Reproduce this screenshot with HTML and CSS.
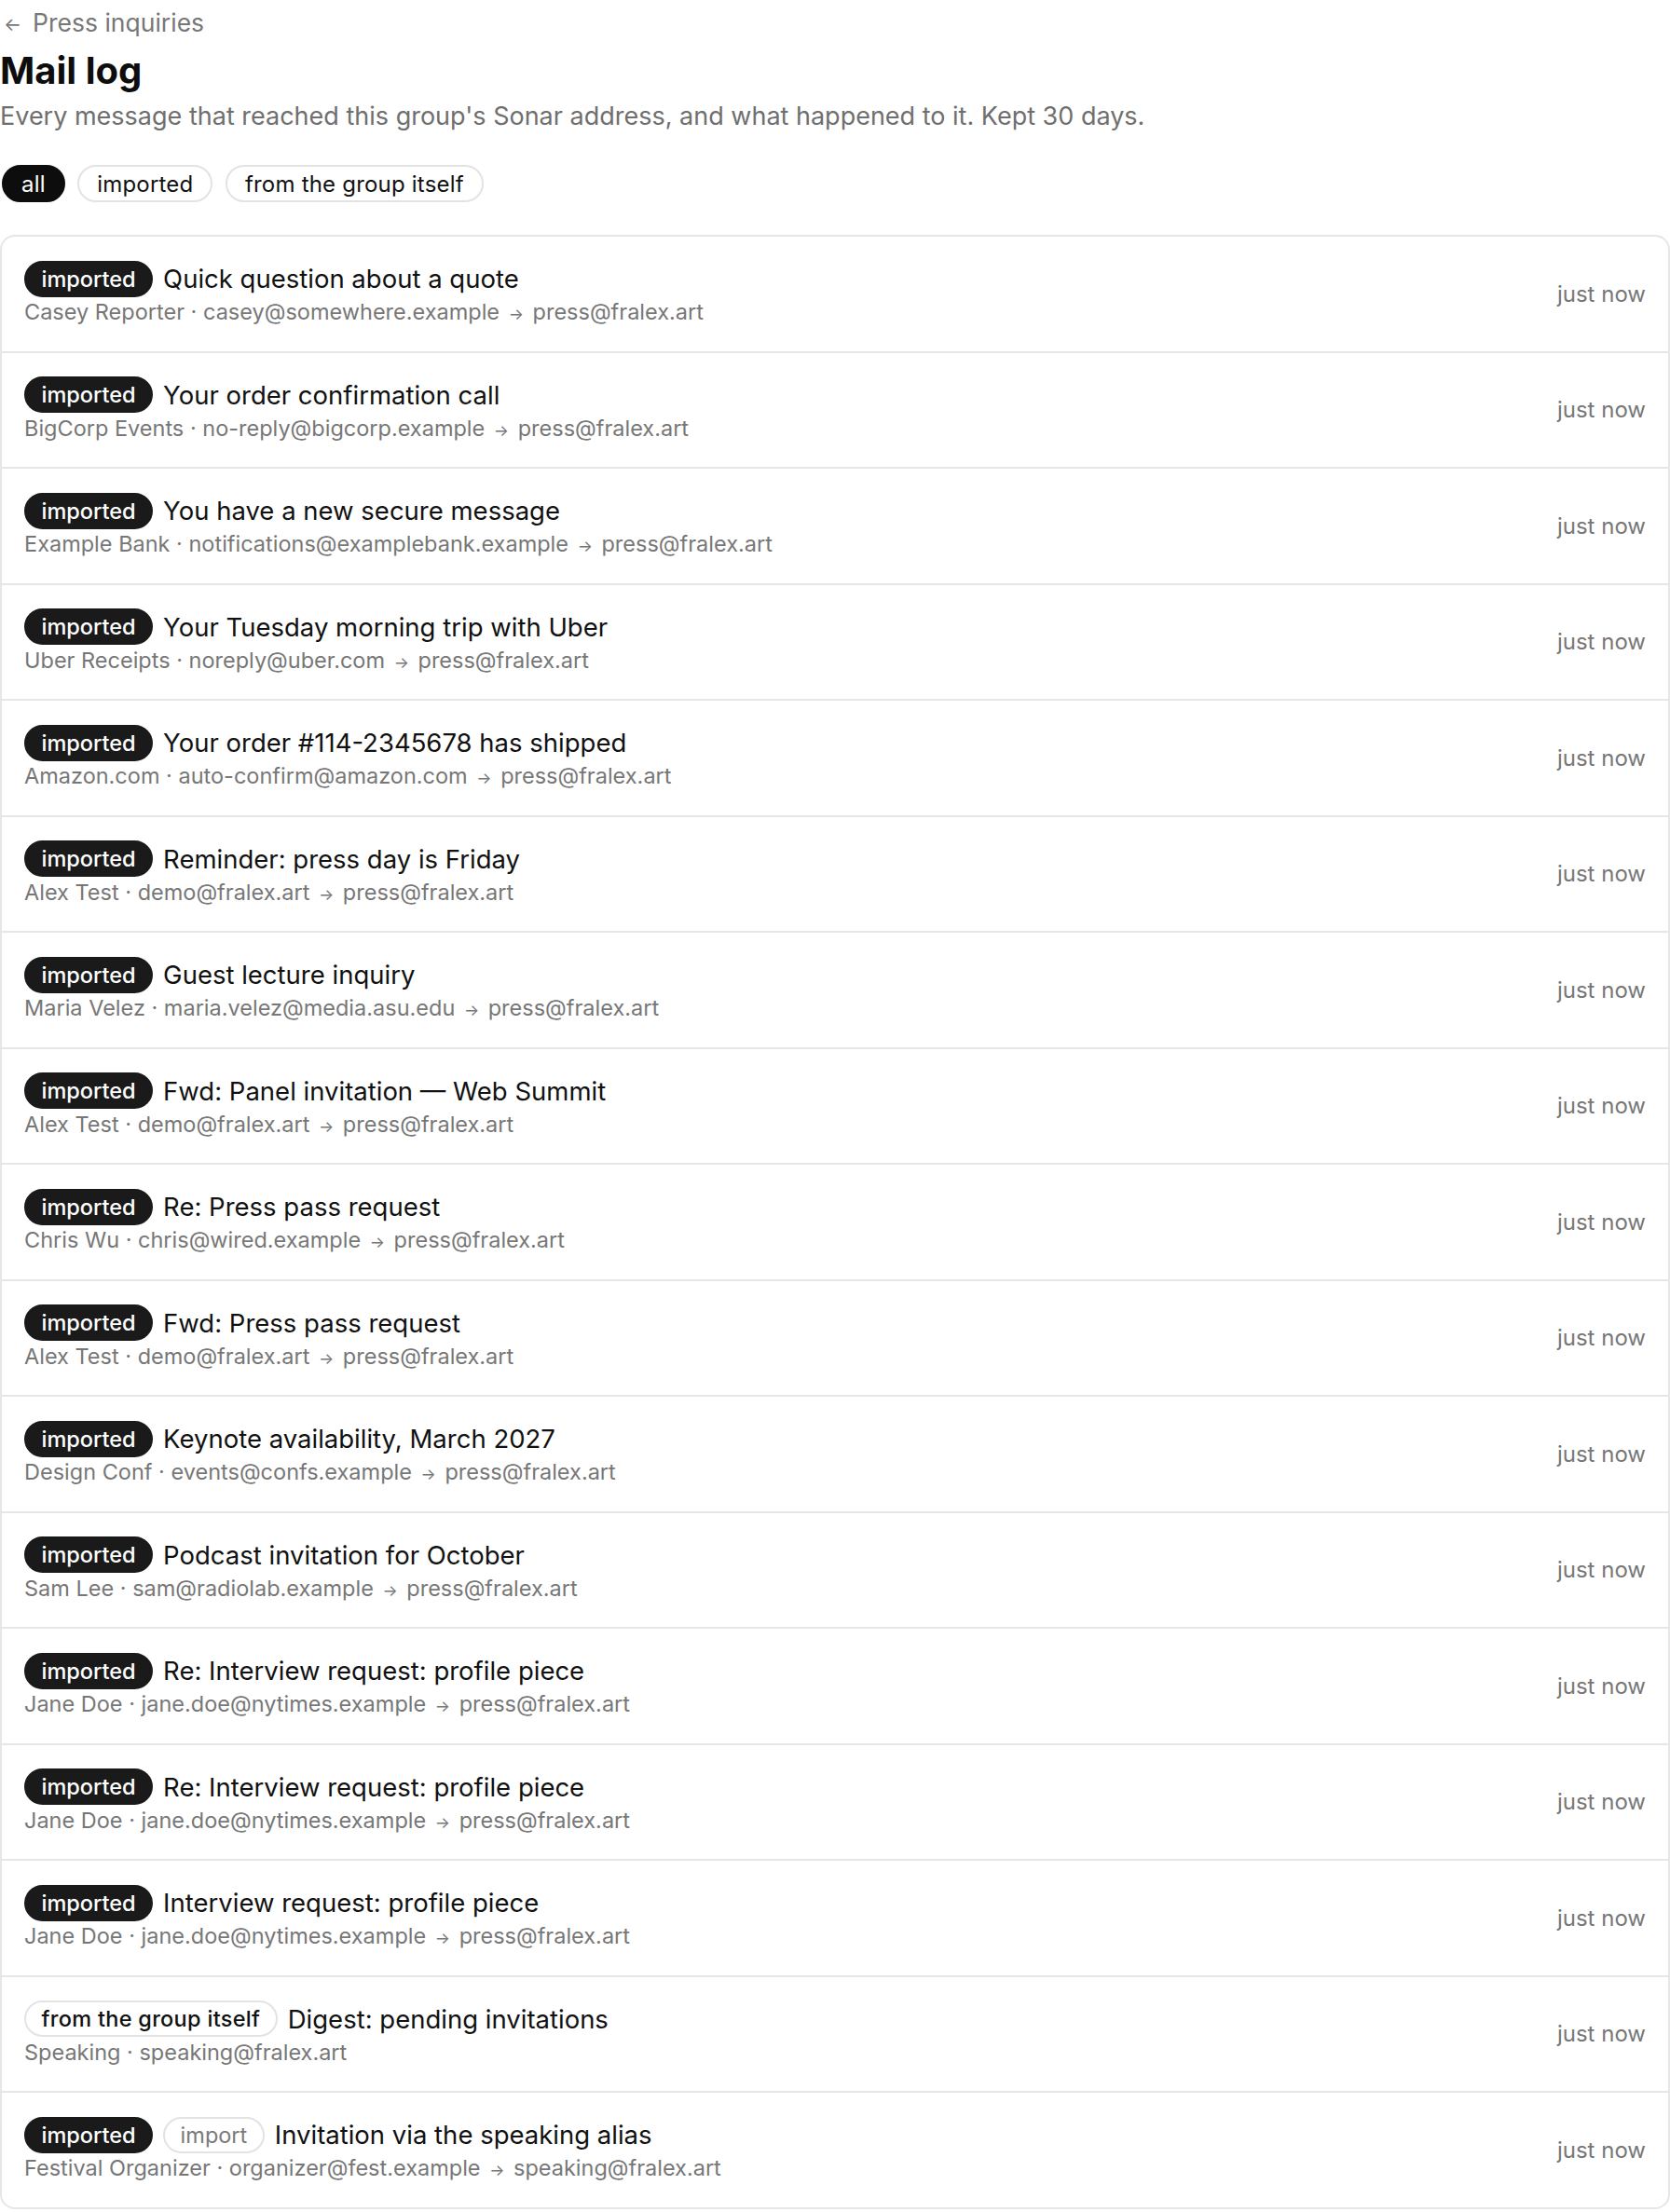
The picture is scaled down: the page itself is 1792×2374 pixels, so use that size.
FILE: index.html
```html
<!DOCTYPE html>
<html lang="en">
<head>
    <meta charset="UTF-8">
    <meta name="viewport" content="width=device-width, initial-scale=1.0">
    <title>Mail log</title>
    <link rel="stylesheet" href="styles.css">
</head>
<body>

<div class="page">
    <a class="back" href="#"><span class="back-arrow">&larr;</span>Press inquiries</a>
    <h1>Mail log</h1>
    <p class="lead">Every message that reached this group's Sonar address, and what happened to it. Kept 30 days.</p>

    <div class="filters">
        <button class="pill active">all</button>
        <button class="pill">imported</button>
        <button class="pill">from the group itself</button>
    </div>

    <div class="log">
        <div class="row">
            <div class="row-main">
                <div class="row-title"><span class="tag">imported</span>Quick question about a quote</div>
                <div class="row-meta">Casey Reporter · casey@somewhere.example <span class="to">&rarr;</span> press@fralex.art</div>
            </div>
            <div class="row-time">just now</div>
        </div>
        <div class="row">
            <div class="row-main">
                <div class="row-title"><span class="tag">imported</span>Your order confirmation call</div>
                <div class="row-meta">BigCorp Events · no-reply@bigcorp.example <span class="to">&rarr;</span> press@fralex.art</div>
            </div>
            <div class="row-time">just now</div>
        </div>
        <div class="row">
            <div class="row-main">
                <div class="row-title"><span class="tag">imported</span>You have a new secure message</div>
                <div class="row-meta">Example Bank · notifications@examplebank.example <span class="to">&rarr;</span> press@fralex.art</div>
            </div>
            <div class="row-time">just now</div>
        </div>
        <div class="row">
            <div class="row-main">
                <div class="row-title"><span class="tag">imported</span>Your Tuesday morning trip with Uber</div>
                <div class="row-meta">Uber Receipts · noreply@uber.com <span class="to">&rarr;</span> press@fralex.art</div>
            </div>
            <div class="row-time">just now</div>
        </div>
        <div class="row">
            <div class="row-main">
                <div class="row-title"><span class="tag">imported</span>Your order #114-2345678 has shipped</div>
                <div class="row-meta">Amazon.com · auto-confirm@amazon.com <span class="to">&rarr;</span> press@fralex.art</div>
            </div>
            <div class="row-time">just now</div>
        </div>
        <div class="row">
            <div class="row-main">
                <div class="row-title"><span class="tag">imported</span>Reminder: press day is Friday</div>
                <div class="row-meta">Alex Test · demo@fralex.art <span class="to">&rarr;</span> press@fralex.art</div>
            </div>
            <div class="row-time">just now</div>
        </div>
        <div class="row">
            <div class="row-main">
                <div class="row-title"><span class="tag">imported</span>Guest lecture inquiry</div>
                <div class="row-meta">Maria Velez · maria.velez@media.asu.edu <span class="to">&rarr;</span> press@fralex.art</div>
            </div>
            <div class="row-time">just now</div>
        </div>
        <div class="row">
            <div class="row-main">
                <div class="row-title"><span class="tag">imported</span>Fwd: Panel invitation — Web Summit</div>
                <div class="row-meta">Alex Test · demo@fralex.art <span class="to">&rarr;</span> press@fralex.art</div>
            </div>
            <div class="row-time">just now</div>
        </div>
        <div class="row">
            <div class="row-main">
                <div class="row-title"><span class="tag">imported</span>Re: Press pass request</div>
                <div class="row-meta">Chris Wu · chris@wired.example <span class="to">&rarr;</span> press@fralex.art</div>
            </div>
            <div class="row-time">just now</div>
        </div>
        <div class="row">
            <div class="row-main">
                <div class="row-title"><span class="tag">imported</span>Fwd: Press pass request</div>
                <div class="row-meta">Alex Test · demo@fralex.art <span class="to">&rarr;</span> press@fralex.art</div>
            </div>
            <div class="row-time">just now</div>
        </div>
        <div class="row">
            <div class="row-main">
                <div class="row-title"><span class="tag">imported</span>Keynote availability, March 2027</div>
                <div class="row-meta">Design Conf · events@confs.example <span class="to">&rarr;</span> press@fralex.art</div>
            </div>
            <div class="row-time">just now</div>
        </div>
        <div class="row">
            <div class="row-main">
                <div class="row-title"><span class="tag">imported</span>Podcast invitation for October</div>
                <div class="row-meta">Sam Lee · sam@radiolab.example <span class="to">&rarr;</span> press@fralex.art</div>
            </div>
            <div class="row-time">just now</div>
        </div>
        <div class="row">
            <div class="row-main">
                <div class="row-title"><span class="tag">imported</span>Re: Interview request: profile piece</div>
                <div class="row-meta">Jane Doe · jane.doe@nytimes.example <span class="to">&rarr;</span> press@fralex.art</div>
            </div>
            <div class="row-time">just now</div>
        </div>
        <div class="row">
            <div class="row-main">
                <div class="row-title"><span class="tag">imported</span>Re: Interview request: profile piece</div>
                <div class="row-meta">Jane Doe · jane.doe@nytimes.example <span class="to">&rarr;</span> press@fralex.art</div>
            </div>
            <div class="row-time">just now</div>
        </div>
        <div class="row">
            <div class="row-main">
                <div class="row-title"><span class="tag">imported</span>Interview request: profile piece</div>
                <div class="row-meta">Jane Doe · jane.doe@nytimes.example <span class="to">&rarr;</span> press@fralex.art</div>
            </div>
            <div class="row-time">just now</div>
        </div>
        <div class="row">
            <div class="row-main">
                <div class="row-title"><span class="tag tag-outline">from the group itself</span>Digest: pending invitations</div>
                <div class="row-meta">Speaking · speaking@fralex.art</div>
            </div>
            <div class="row-time">just now</div>
        </div>
        <div class="row">
            <div class="row-main">
                <div class="row-title"><span class="tag">imported</span><span class="tag tag-muted">import</span>Invitation via the speaking alias</div>
                <div class="row-meta">Festival Organizer · organizer@fest.example <span class="to">&rarr;</span> speaking@fralex.art</div>
            </div>
            <div class="row-time">just now</div>
        </div>
    </div>
</div>

</body>
</html>
```

FILE: styles.css
```css
* {
    margin: 0;
    padding: 0;
    box-sizing: border-box;
}

body {
    font-family: Inter, "Noto Sans", sans-serif;
    background-color: #ffffff;
    color: #111111;
}

.page {
    padding-top: 2.5px;
}

.back {
    display: inline-flex;
    align-items: center;
    font-size: 26.5px;
    line-height: 39px;
    color: #777777;
    text-decoration: none;
}

.back-arrow {
    font-size: 20px;
    margin: 4px 12px 0 4px;
}

h1 {
    font-size: 40px;
    line-height: 46px;
    font-weight: 700;
    margin-top: 7.5px;
    color: #0d0d0d;
}

.lead {
    font-size: 27px;
    line-height: 39px;
    color: #6f6f6f;
    margin-top: 5.5px;
}

.filters {
    display: flex;
    gap: 13.5px;
    margin-top: 33.5px;
    padding-left: 2px;
}

.pill {
    font-family: inherit;
    height: 40px;
    padding: 0 19px;
    font-size: 24px;
    letter-spacing: 0.2px;
    color: #111111;
    background: #ffffff;
    border: 2px solid #e3e3e3;
    border-radius: 20px;
    cursor: pointer;
}

.pill.active {
    background: #0d0d0d;
    border-color: #0d0d0d;
    color: #ffffff;
}

.log {
    margin-top: 35px;
    border: 2px solid #e6e6e6;
    border-radius: 16px;
}

.row {
    display: flex;
    align-items: center;
    justify-content: space-between;
    padding: 25px 24px;
    border-bottom: 2px solid #e6e6e6;
}

.row:last-child {
    border-bottom: none;
}

.row-title {
    display: flex;
    align-items: center;
    height: 40px;
    font-size: 27.5px;
    color: #111111;
}

.tag {
    display: inline-flex;
    align-items: center;
    height: 39px;
    padding: 0 16.5px;
    margin-right: 11px;
    font-size: 23.5px;
    font-weight: 500;
    color: #ffffff;
    background: #1a1a1a;
    border: 2px solid #1a1a1a;
    border-radius: 20px;
}

.tag-outline {
    color: #111111;
    background: #ffffff;
    border-color: #e3e3e3;
    letter-spacing: 0.3px;
}

.tag-muted {
    color: #7a7a7a;
    background: #ffffff;
    border-color: #e3e3e3;
    font-weight: 400;
}

.row-meta {
    font-size: 23.5px;
    line-height: 32.5px;
    color: #777777;
}

.row-meta .to {
    font-size: 17px;
    line-height: 1;
    margin: 0 3px;
}

.row-time {
    font-size: 24px;
    color: #777777;
}
```
